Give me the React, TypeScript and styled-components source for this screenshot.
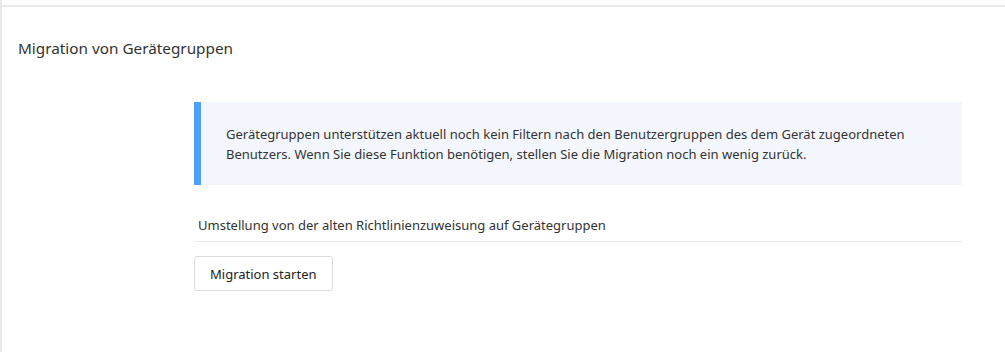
import React from "react";
import styled, { createGlobalStyle } from "styled-components";

const Global = createGlobalStyle`
  html, body { margin: 0; padding: 0; background: #ffffff; }
  body { font-family: "Noto Sans", "Open Sans", sans-serif; color: #333; }
`;

const Page = styled.div`
  height: 352px;
  box-sizing: border-box;
  border-left: 2px solid #e8e8e8;
  padding-top: 5px;
`;

const Card = styled.section`
  border-top: 2px solid #ebebeb;
  height: 100%;
`;

const Title = styled.h2`
  margin: 0;
  padding: 30px 16px 0;
  font-size: 15.3px;
  font-weight: 400;
  line-height: 22px;
  color: #333;
`;

const Content = styled.div`
  margin: 43px 0 0 192px;
  width: 768px;
  display: flex;
  flex-direction: column;
`;

const Alert = styled.div`
  background: #f3f7fd;
  border-left: 7px solid #4ba0f9;
  padding: 22px 20px 21px 25px;
  font-size: 13px;
  line-height: 20px;
  color: #333;
`;

const Section = styled.div`
  margin-top: 30px;
  padding: 0 4px 6px;
  border-bottom: 1px solid #e8e8e8;
  font-size: 13px;
  line-height: 20px;
  color: #333;
`;

const Button = styled.button`
  margin-top: 14px;
  align-self: flex-start;
  height: 35px;
  padding: 0 15px;
  background: #fff;
  border: 1px solid #dcdcdc;
  border-radius: 3px;
  font-family: inherit;
  font-size: 13px;
  color: #222;
`;

export default function App() {
  return (
    <>
      <Global />
      <Page>
        <Card>
          <Title>Migration von Gerätegruppen</Title>
          <Content>
            <Alert>
              Gerätegruppen unterstützen aktuell noch kein Filtern nach den Benutzergruppen des dem Gerät zugeordneten
              <br />
              Benutzers. Wenn Sie diese Funktion benötigen, stellen Sie die Migration noch ein wenig zurück.
            </Alert>
            <Section>Umstellung von der alten Richtlinienzuweisung auf Gerätegruppen</Section>
            <Button>Migration starten</Button>
          </Content>
        </Card>
      </Page>
    </>
  );
}
